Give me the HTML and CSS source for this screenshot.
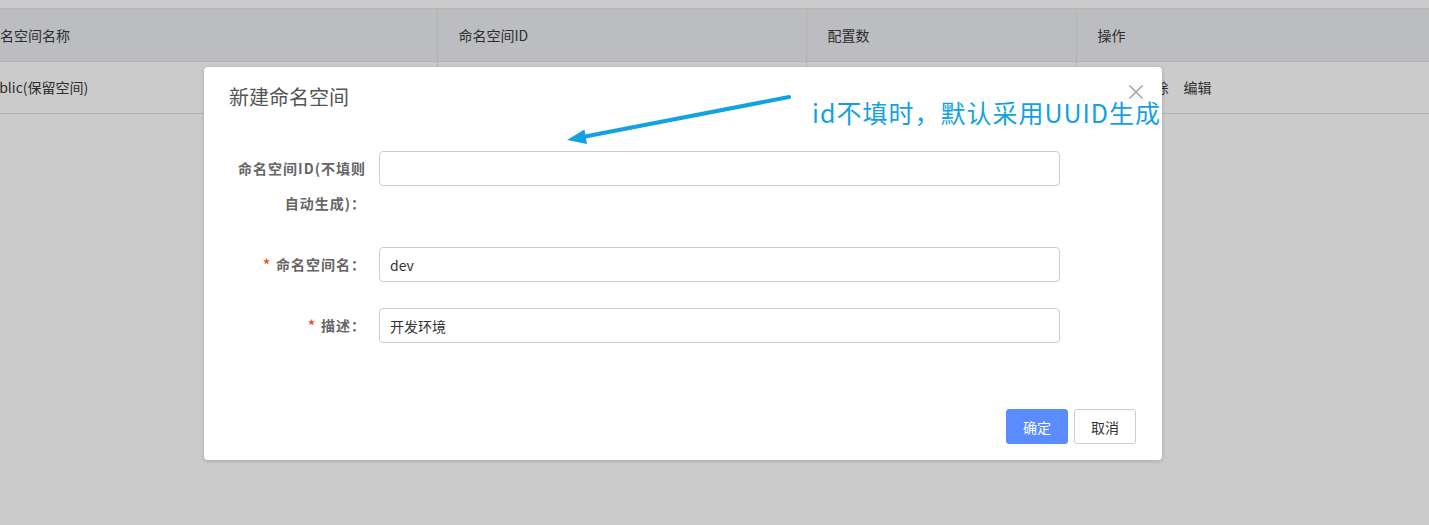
FILE: index.html
```html
<!DOCTYPE html>
<html lang="zh-CN">
<head>
<meta charset="utf-8">
<title>新建命名空间</title>
<link rel="stylesheet" href="styles.css">
</head>
<body>
<div class="page">
  <div class="topbar"></div>
  <table class="grid">
    <colgroup>
      <col class="c1"><col class="c2"><col class="c3"><col class="c4">
    </colgroup>
    <thead>
      <tr><th>命名空间名称</th><th>命名空间ID</th><th>配置数</th><th>操作</th></tr>
    </thead>
    <tbody>
      <tr>
        <td><span class="row-name">public(保留空间)</span></td>
        <td></td>
        <td>0</td>
        <td><div class="ops"><a>详情</a><a>删除</a><a>编辑</a></div></td>
      </tr>
    </tbody>
  </table>
</div>

<div class="mask">
  <div class="modal">
    <div class="modal-header">
      <span class="modal-title">新建命名空间</span>
      <span class="close" aria-label="关闭">
        <svg viewBox="0 0 16 16" width="16" height="16"><path d="M1.5 1.5 L14.5 14.5 M14.5 1.5 L1.5 14.5" stroke="#a0a0a0" stroke-width="1.5" fill="none"/></svg>
      </span>
    </div>
    <div class="modal-body">
      <div class="form-row">
        <label class="form-label">命名空间ID(不填则<br>自动生成)：</label>
        <input class="form-input" type="text" value="">
      </div>
      <div class="form-row">
        <label class="form-label"><span class="req">*</span>命名空间名：</label>
        <input class="form-input" type="text" value="dev">
      </div>
      <div class="form-row">
        <label class="form-label"><span class="req">*</span>描述：</label>
        <input class="form-input" type="text" value="开发环境">
      </div>
    </div>
    <div class="modal-footer">
      <button class="btn btn-primary">确定</button>
      <button class="btn">取消</button>
    </div>
  </div>

  <svg class="arrow" viewBox="0 0 1429 525" width="1429" height="525">
    <line x1="789" y1="97" x2="580" y2="137.5" stroke="#14a1e2" stroke-width="4" stroke-linecap="round"/>
    <polygon points="567,140 584.4,129.5 587,144" fill="#14a1e2"/>
  </svg>
  <div class="note">id不填时，默认采用UUID生成</div>
</div>
</body>
</html>
```

FILE: styles.css
```css
html, body {
  margin: 0;
  padding: 0;
}
body {
  width: 1429px;
  height: 525px;
  overflow: hidden;
  background: #cbcbcb;
  font-family: "Noto Sans CJK SC", "Noto Sans", sans-serif;
  font-size: 14px;
  color: #333;
  position: relative;
}
.page {
  width: 1429px;
  overflow: hidden;
}
.topbar {
  height: 8px;
  background: #cccccc;
  border-bottom: 1px solid #b6b6b8;
}
.grid {
  margin-left: -35px;
  border-collapse: collapse;
  table-layout: fixed;
  width: 1511px;
}
.c1 { width: 472px; }
.c2 { width: 369px; }
.c3 { width: 270px; }
.c4 { width: 400px; }
.grid th,
.grid td {
  text-align: left;
  font-weight: normal;
  padding: 0 0 0 21px;
  height: 52px;
  box-sizing: border-box;
  border-right: 1px solid #b3b3b6;
  border-bottom: 1px solid #b3b3b6;
  white-space: nowrap;
  color: #2e2e2e;
}
.grid th {
  background: #bcbdc1;
}
.grid td {
  background: #cbcbcb;
}
.row-name {
  margin-left: -4px;
}
.ops {
  display: flex;
  gap: 15px;
}
.mask {
  position: absolute;
  inset: 0;
}
.modal {
  margin: 67px 0 0 204px;
  width: 958px;
  height: 393px;
  box-sizing: border-box;
  background: #fff;
  border-radius: 4px;
  box-shadow: 0 1px 4px rgba(0, 0, 0, 0.18);
  display: flex;
  flex-direction: column;
  position: relative;
}
.modal-header {
  padding: 18px 25px 0;
  height: 42px;
  box-sizing: border-box;
}
.modal-title {
  font-size: 20px;
  line-height: 24px;
  color: #555;
  display: block;
}
.close {
  position: absolute;
  top: 17px;
  right: 18px;
  width: 16px;
  height: 16px;
  display: block;
}
.close svg { display: block; }
.modal-body {
  padding-top: 42px;
  display: flex;
  flex-direction: column;
  gap: 26px;
}
.form-row {
  display: grid;
  grid-template-columns: 161px 681px;
  column-gap: 14px;
  align-items: start;
}
.form-label {
  text-align: right;
  font-weight: bold;
  color: #666;
  font-size: 14px;
  line-height: 35px;
  letter-spacing: 1px;
  margin-right: -1px;
}
.req {
  color: #f0502a;
  margin-right: 5px;
}
.form-input {
  height: 35px;
  box-sizing: border-box;
  border: 1px solid #cbcbd4;
  border-radius: 4px;
  padding: 0 10px;
  font-family: "Noto Sans CJK SC", "Noto Sans", sans-serif;
  font-size: 14px;
  color: #333;
  outline: none;
  margin: 0;
}
.modal-footer {
  margin-top: auto;
  padding: 0 26px 16px 0;
  display: flex;
  justify-content: flex-end;
  gap: 6px;
}
.btn {
  width: 62px;
  height: 35px;
  box-sizing: border-box;
  border: 1px solid #cbcbd4;
  background: #fff;
  border-radius: 3px;
  font-family: "Noto Sans CJK SC", "Noto Sans", sans-serif;
  font-size: 14px;
  color: #333;
  padding: 0;
}
.btn-primary {
  background: #5a8bff;
  border-color: #5a8bff;
  color: #fff;
}
.arrow {
  position: absolute;
  left: 0;
  top: 0;
  pointer-events: none;
}
.note {
  position: absolute;
  left: 812px;
  top: 97px;
  font-size: 25px;
  line-height: 30px;
  letter-spacing: 1px;
  color: #14a1e2;
  white-space: nowrap;
}
```
